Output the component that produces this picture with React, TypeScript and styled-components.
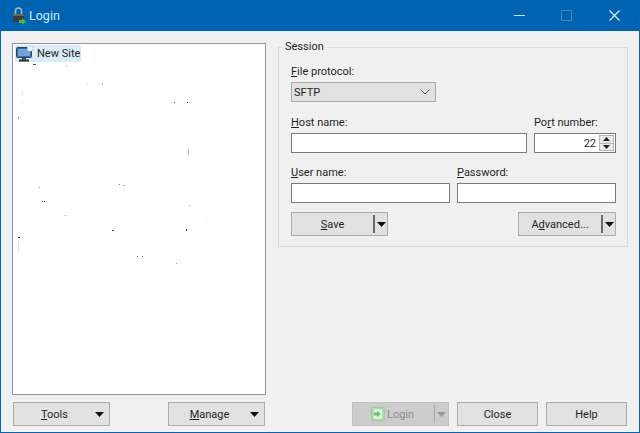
import React from "react";
import styled, { createGlobalStyle } from "styled-components";

const GlobalStyle = createGlobalStyle`
  html, body {
    margin: 0;
    padding: 0;
    background: #f0f0f0;
  }
  body {
    font-family: Roboto, "Noto Sans", sans-serif;
    font-size: 11px;
    color: #1f1f1f;
  }
`;

// stray pixels in the empty tree area: x, y, width, height, colour
const specks: [number, number, number, number, string][] = [
  [20, 20, 3, 1, "#555"],
  [53, 22, 1, 1, "#bbb"],
  [74, 39, 1, 1, "#ccc"],
  [89, 39, 1, 1, "#777"],
  [9, 48, 1, 2, "#ccc"],
  [9, 58, 1, 1, "#ccc"],
  [161, 58, 1, 1, "#555"],
  [174, 58, 1, 1, "#333"],
  [5, 73, 1, 2, "#999"],
  [175, 105, 1, 6, "#9fc9c9"],
  [106, 140, 1, 1, "#777"],
  [110, 141, 2, 1, "#aaa"],
  [25, 143, 2, 1, "#bbb"],
  [29, 157, 1, 1, "#333"],
  [31, 157, 1, 1, "#333"],
  [176, 161, 1, 1, "#aaa"],
  [51, 171, 3, 1, "#ddd"],
  [193, 177, 1, 1, "#bcd"],
  [99, 186, 2, 1, "#444"],
  [173, 185, 1, 2, "#333"],
  [5, 193, 2, 1, "#222"],
  [5, 198, 1, 10, "#ddd"],
  [124, 212, 1, 1, "#666"],
  [129, 212, 1, 1, "#666"],
  [163, 219, 1, 1, "#999"],
];

const CaretIcon = ({ color = "#111" }: { color?: string }) => (
  <svg width="9" height="5" viewBox="0 0 9 5">
    <path d="M0 0h9L4.5 5z" fill={color} />
  </svg>
);

const LockIcon = () => (
  <svg width="18" height="20" viewBox="0 0 18 20">
    <path d="M4.5 8V5a3 3 0 0 1 6 0v3" fill="none" stroke="#aab2bb" strokeWidth="1.6" />
    <rect x="2" y="8" width="11" height="8" rx="1" fill="#403a36" />
    <rect x="2" y="8" width="11" height="2" fill="#76644c" />
    <path d="M8 14h3v-2l4 3.5-4 3.5v-2H8z" fill="#45c03c" />
  </svg>
);

const MonitorIcon = () => (
  <svg width="18" height="18" viewBox="0 0 18 18">
    <rect x="0.5" y="2.5" width="15" height="10" rx="1" fill="#3d6ea8" stroke="#24466f" />
    <rect x="2" y="4" width="12" height="7" fill="#6fa3da" />
    <rect x="6" y="12.5" width="4" height="2" fill="#39424c" />
    <rect x="3" y="14.5" width="10" height="2" rx="0.5" fill="#22282f" />
    <rect x="11.5" y="1" width="5" height="5" rx="1" fill="#eef4fa" stroke="#b6c7d8" strokeWidth="0.6" />
  </svg>
);

const LoginIcon = () => (
  <svg width="14" height="14" viewBox="0 0 15 15">
    <rect x="0.5" y="0.5" width="14" height="14" rx="1.5" fill="#a9dda6" stroke="#95cf93" />
    <rect x="3" y="2.5" width="9" height="10" fill="#e7f5e6" />
    <path d="M3 6h3.5V4l4 3.5-4 3.5V9H3z" fill="#6fc06b" />
  </svg>
);

const SpinIcon = ({ down }: { down?: boolean }) => (
  <svg width="7" height="4" viewBox="0 0 7 4">
    <path d={down ? "M0 0h7L3.5 4z" : "M3.5 0L7 4H0z"} fill="#222" />
  </svg>
);

const App: React.FC = () => (
  <Window>
    <GlobalStyle />
    <TitleBar>
      <TitleIcon>
        <LockIcon />
      </TitleIcon>
      <TitleText>Login</TitleText>
      <WindowControls>
        <WindowControl>
          <svg width="11" height="11" viewBox="0 0 11 11">
            <path d="M0 5.5h11" stroke="#cfe2f2" strokeWidth="1" />
          </svg>
        </WindowControl>
        <WindowControl>
          <svg width="11" height="11" viewBox="0 0 11 11">
            <rect x="0.5" y="0.5" width="10" height="10" fill="none" stroke="#3f88c5" />
          </svg>
        </WindowControl>
        <WindowControl>
          <svg width="11" height="11" viewBox="0 0 11 11">
            <path d="M0.5 0.5l10 10M10.5 0.5l-10 10" stroke="#e3eff8" strokeWidth="1.1" />
          </svg>
        </WindowControl>
      </WindowControls>
    </TitleBar>
    <Body>
      <LeftColumn>
        <SiteTree>
          <TreeItem>
            <MonitorIcon />
            <TreeLabel>New Site</TreeLabel>
          </TreeItem>
          <Specks width="252" height="350" viewBox="0 0 252 350">
            {specks.map(([x, y, w, h, c]) => (
              <rect key={`${x}-${y}`} x={x} y={y} width={w} height={h} fill={c} />
            ))}
          </Specks>
        </SiteTree>
        <LeftButtons>
          <MenuButton>
            <MenuLabel><u>T</u>ools</MenuLabel>
            <CaretIcon />
          </MenuButton>
          <MenuButton>
            <MenuLabel><u>M</u>anage</MenuLabel>
            <CaretIcon />
          </MenuButton>
        </LeftButtons>
      </LeftColumn>
      <RightColumn>
        <SessionGroup>
          <SessionLegend>Session</SessionLegend>
          <Row $top={11}>
            <Field $width={145}>
              <FieldLabel><u>F</u>ile protocol:</FieldLabel>
              <Select>
                SFTP
                <svg width="10" height="6" viewBox="0 0 10 6">
                  <path d="M0.5 0.5L5 5l4.5-4.5" fill="none" stroke="#555" />
                </svg>
              </Select>
            </Field>
          </Row>
          <Row $top={13}>
            <Field $width={236}>
              <FieldLabel><u>H</u>ost name:</FieldLabel>
              <TextBox />
            </Field>
            <Field $width={82}>
              <FieldLabel>Po<u>r</u>t number:</FieldLabel>
              <PortBox>
                22
                <Spinner>
                  <SpinButton><SpinIcon /></SpinButton>
                  <SpinButton><SpinIcon down /></SpinButton>
                </Spinner>
              </PortBox>
            </Field>
          </Row>
          <Row $top={12}>
            <Field $width={159}>
              <FieldLabel><u>U</u>ser name:</FieldLabel>
              <TextBox />
            </Field>
            <Field $width={159}>
              <FieldLabel><u>P</u>assword:</FieldLabel>
              <TextBox />
            </Field>
          </Row>
          <ActionRow>
            <SplitButton>
              <SplitLabel><u>S</u>ave</SplitLabel>
              <SplitArrow><CaretIcon /></SplitArrow>
            </SplitButton>
            <SplitButton>
              <SplitLabel>A<u>d</u>vanced...</SplitLabel>
              <SplitArrow><CaretIcon /></SplitArrow>
            </SplitButton>
          </ActionRow>
        </SessionGroup>
        <DialogButtons>
          <LoginButton disabled>
            <LoginLabel>
              <LoginIcon />
              Login
            </LoginLabel>
            <LoginArrow><CaretIcon color="#9c9c9c" /></LoginArrow>
          </LoginButton>
          <PlainButton>Close</PlainButton>
          <PlainButton>Help</PlainButton>
        </DialogButtons>
      </RightColumn>
    </Body>
  </Window>
);

export default App;

const Window = styled.div`
  box-sizing: border-box;
  width: 640px;
  height: 433px;
  display: flex;
  flex-direction: column;
  background: #f0f0f0;
  border: 1px solid #0a64ad;
  border-top: 0;
  overflow: hidden;
`;

const TitleBar = styled.div`
  height: 31px;
  flex: none;
  display: flex;
  align-items: center;
  background: #0063b1;
  padding-left: 10px;
`;

const TitleIcon = styled.div`
  width: 18px;
  height: 20px;
`;

const TitleText = styled.div`
  font-size: 12.5px;
  color: #d5e8f6;
  margin-top: -1px;
`;

const WindowControls = styled.div`
  margin-left: auto;
  display: flex;
  padding-right: 1px;
`;

const WindowControl = styled.div`
  width: 47.5px;
  height: 30px;
  display: flex;
  align-items: center;
  justify-content: center;
`;

const Body = styled.div`
  flex: 1;
  display: flex;
  gap: 12px;
  padding: 10px 11px 6px 11px;
  min-height: 0;
`;

const LeftColumn = styled.div`
  width: 254px;
  display: flex;
  flex-direction: column;
  padding-top: 2px;
`;

const SiteTree = styled.div`
  box-sizing: border-box;
  position: relative;
  height: 352px;
  background: #fff;
  border: 1px solid #8f949c;
  padding: 1px 2px;
`;

const Specks = styled.svg`
  position: absolute;
  left: 0;
  top: 0;
`;

const TreeItem = styled.div`
  display: flex;
  align-items: center;
  gap: 2px;
  width: fit-content;
  height: 17px;
  background: #d9ebf9;
  padding-left: 1px;
`;

const TreeLabel = styled.span`
  padding: 0 1px;
`;

const LeftButtons = styled.div`
  display: flex;
  justify-content: space-between;
  margin-top: 7px;
  padding: 0 1px;
`;

const ButtonBase = styled.button`
  box-sizing: border-box;
  height: 24px;
  margin: 0;
  padding: 0;
  background: #e1e1e1;
  border: 1px solid #adadad;
  font: inherit;
  color: inherit;
`;

const MenuButton = styled(ButtonBase)`
  width: 97px;
  display: flex;
  align-items: center;
`;

const MenuLabel = styled.span`
  width: 81px;
  text-align: center;
`;

const RightColumn = styled.div`
  width: 350px;
  display: flex;
  flex-direction: column;
`;

const SessionGroup = styled.fieldset`
  box-sizing: border-box;
  height: 206px;
  margin: 0;
  padding: 0 11px 0 12px;
  border: 1px solid #dcdcdc;
  display: flex;
  flex-direction: column;
  min-width: 0;
`;

const SessionLegend = styled.legend`
  margin-left: -9px;
  padding: 0 3px;
  line-height: 12px;
`;

const Row = styled.div<{ $top: number }>`
  display: flex;
  justify-content: space-between;
  margin-top: ${(p) => p.$top}px;
`;

const Field = styled.div<{ $width: number }>`
  width: ${(p) => p.$width}px;
  display: flex;
  flex-direction: column;
  gap: 2px;
`;

const FieldLabel = styled.label`
  height: 16px;
  line-height: 16px;
  white-space: nowrap;
`;

const Select = styled.div`
  box-sizing: border-box;
  height: 20px;
  display: flex;
  align-items: center;
  justify-content: space-between;
  padding: 0 5px 0 2px;
  background: #e1e1e1;
  border: 1px solid #adadad;
`;

const TextBox = styled.div`
  box-sizing: border-box;
  height: 20px;
  background: #fff;
  border: 1px solid #7a7a7a;
`;

const PortBox = styled(TextBox)`
  display: flex;
  align-items: center;
  justify-content: flex-end;
  gap: 3px;
  padding-right: 1px;
`;

const Spinner = styled.div`
  width: 15px;
  height: 16px;
  display: flex;
  flex-direction: column;
`;

const SpinButton = styled.div`
  flex: 1;
  display: flex;
  align-items: center;
  justify-content: center;
  background: #e9e9e9;
  border: 1px solid #b5b5b5;
  margin-top: -1px;
  &:first-child {
    margin-top: 0;
  }
`;

const ActionRow = styled.div`
  display: flex;
  justify-content: space-between;
  margin-top: 9px;
`;

const SplitButton = styled(ButtonBase)`
  width: 97px;
  display: flex;
  align-items: center;
  &:last-child {
    width: 98px;
  }
`;

const SplitLabel = styled.span`
  flex: 1;
  text-align: center;
`;

const SplitArrow = styled.span`
  box-sizing: border-box;
  width: 14px;
  height: 18px;
  display: flex;
  align-items: center;
  justify-content: center;
  border-left: 2px solid #6a6a6a;
`;

const DialogButtons = styled.div`
  display: flex;
  gap: 8px;
  margin-top: auto;
  margin-left: 74px;
`;

const LoginButton = styled(ButtonBase)`
  width: 97px;
  display: flex;
  align-items: center;
  background: #cccccc;
  border-color: #c2c2c2;
  color: #8f8f8f;
`;

const LoginLabel = styled.span`
  flex: 1;
  display: flex;
  align-items: center;
  gap: 2px;
  padding-left: 18px;
`;

const LoginArrow = styled.span`
  box-sizing: border-box;
  width: 14px;
  height: 18px;
  display: flex;
  align-items: center;
  justify-content: center;
  border-left: 1px solid #a8a8a8;
`;

const PlainButton = styled(ButtonBase)`
  width: 81px;
`;
